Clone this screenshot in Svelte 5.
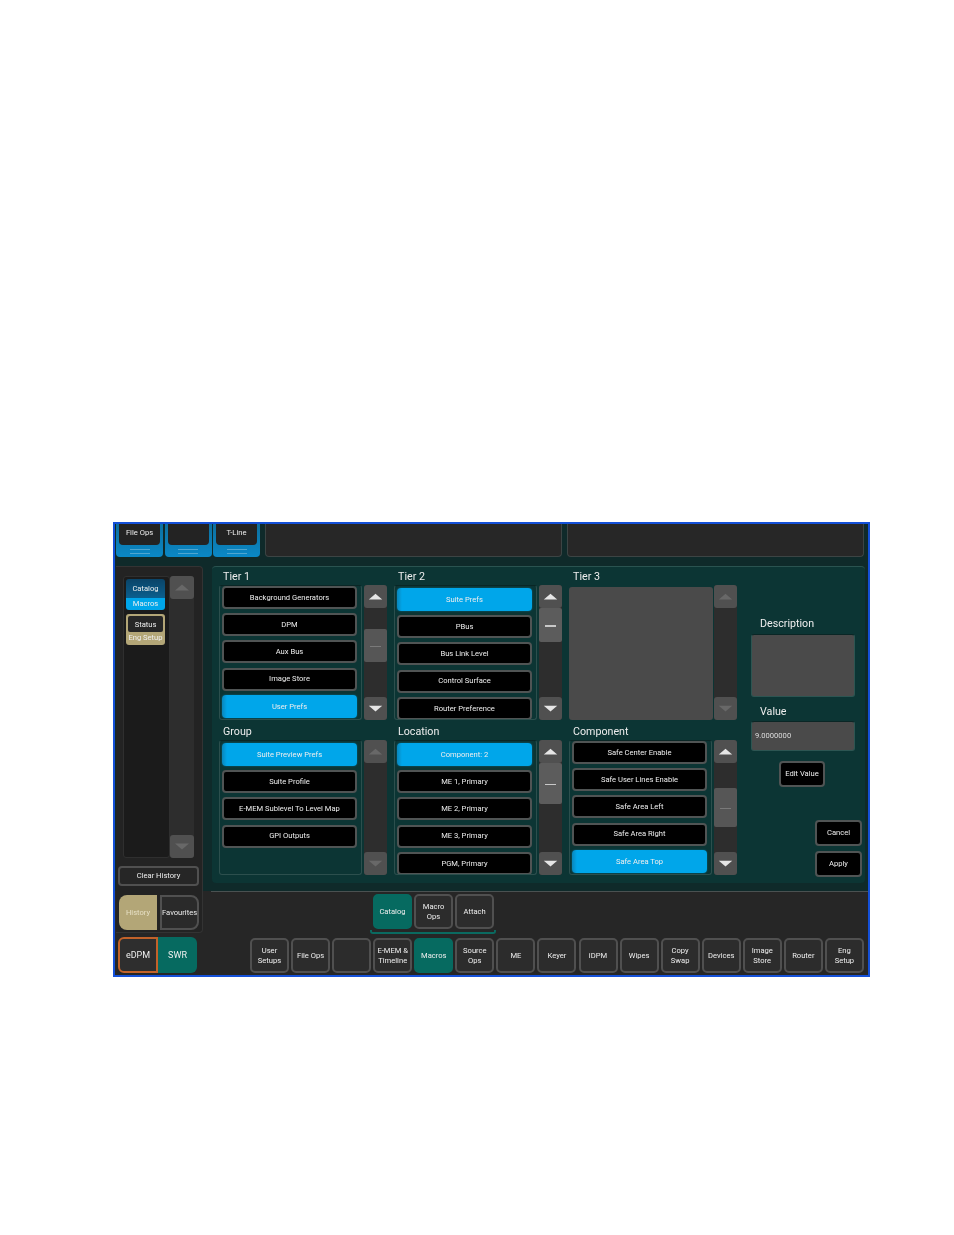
<script>
  const tabs = ['File Ops', '', 'T-Line'];

  const lists = [
    { title: 'Tier 1', active: 4, items: ['Background Generators', 'DPM', 'Aux Bus', 'Image Store', 'User Prefs'], thumb: [44, 33], dim: true, on: true, pitch: 'a' },
    { title: 'Tier 2', active: 0, items: ['Suite Prefs', 'PBus', 'Bus Link Level', 'Control Surface', 'Router Preference'], thumb: [23, 34], on: true, pitch: 'b' },
    { title: 'Tier 3', active: -1, items: [], on: false, empty: true },
    { title: 'Group', active: 0, items: ['Suite Preview Prefs', 'Suite Profile', 'E-MEM Sublevel To Level Map', 'GPI Outputs'], on: false, pitch: 'b' },
    { title: 'Location', active: 0, items: ['Component: 2', 'ME 1, Primary', 'ME 2, Primary', 'ME 3, Primary', 'PGM, Primary'], thumb: [23, 41], on: true, pitch: 'b' },
    { title: 'Component', active: 4, items: ['Safe Center Enable', 'Safe User Lines Enable', 'Safe Area Left', 'Safe Area Right', 'Safe Area Top'], thumb: [48, 39], dim: true, on: true, pitch: 'a' }
  ];

  const nav = [
    ['User', 'Setups'], ['File Ops'], [''], ['E-MEM &', 'Timeline'], ['Macros'], ['Source', 'Ops'], ['ME'], ['Keyer'],
    ['iDPM'], ['Wipes'], ['Copy', 'Swap'], ['Devices'], ['Image', 'Store'], ['Router'], ['Eng', 'Setup']
  ];
</script>

<div class="window">
  <header class="top">
    {#each tabs as tab}
      <div class="tab">
        <div class="tab-face">{tab}</div>
        <div class="tab-lines"></div>
      </div>
    {/each}
    <div class="slot wide"></div>
    <div class="slot wider"></div>
  </header>

  <div class="body">
    <aside class="left">
      <div class="side">
        <div class="history">
          <div class="history-list">
            <div class="chip blue"><span>Catalog</span><em>Macros</em></div>
            <div class="chip tan"><span>Status</span><em>Eng Setup</em></div>
          </div>
          <div class="track tall">
            <div class="arrow"><svg viewBox="0 0 24 22"><path d="M5 14 12 8 19 14Z" /></svg></div>
            <div class="arrow"><svg viewBox="0 0 24 22"><path d="M5 8 12 14 19 8Z" /></svg></div>
          </div>
        </div>
        <button class="clear">Clear History</button>
        <div class="modes">
          <button class="mode picked">History</button>
          <button class="mode">Favourites</button>
        </div>
      </div>
      <div class="sys">
        <button class="edpm">eDPM</button>
        <button class="swr">SWR</button>
      </div>
    </aside>

    <div class="right">
      <main class="panel">
        {#each lists as list}
          <section class="cell">
            <h2>{list.title}</h2>
            <div class="row">
              {#if list.empty}
                <div class="blank"></div>
              {:else}
                <div class="list {list.pitch}">
                  {#each list.items as item, i}
                    <button class="item" class:active={i === list.active}>{item}</button>
                  {/each}
                </div>
              {/if}
              <div class="track">
                <div class="arrow" class:live={list.on}><svg viewBox="0 0 24 22"><path d="M5 14 12 8 19 14Z" /></svg></div>
                {#if list.thumb}
                  <div class="thumb" class:dim={list.dim} style="top: {list.thumb[0]}px; height: {list.thumb[1]}px"><i></i></div>
                {/if}
                <div class="arrow" class:live={list.on}><svg viewBox="0 0 24 22"><path d="M5 8 12 14 19 8Z" /></svg></div>
              </div>
            </div>
          </section>
        {/each}

        <section class="values">
          <h3>Description</h3>
          <div class="box desc"></div>
          <h3 class="value-label">Value</h3>
          <div class="box val">9.0000000</div>
          <button class="action edit">Edit Value</button>
          <button class="action cancel">Cancel</button>
          <button class="action apply">Apply</button>
        </section>
      </main>

      <footer class="lower">
        <div class="subs">
          <button class="key teal">Catalog</button>
          <button class="key">Macro<br />Ops</button>
          <button class="key">Attach</button>
        </div>
        <div class="bracket"></div>
        <nav class="keys">
          {#each nav as label}
            <button class="key" class:teal={label[0] === 'Macros'}>
              {#each label as line, i}{#if i > 0}<br />{/if}{line}{/each}
            </button>
          {/each}
        </nav>
      </footer>
    </div>
  </div>
</div>

<style>
  :global(body) {
    background: #fff;
  }

  .window {
    box-sizing: border-box;
    width: 757px;
    height: 455px;
    margin: 522px 0 0 113px;
    border: 2px solid #1450d8;
    background: #0f2a2a;
    font-family: Roboto, sans-serif;
    font-size: 7.6px;
    color: #eee;
    overflow: hidden;
    filter: blur(0.3px);
  }

  button {
    font: inherit;
    color: inherit;
    padding: 0;
    line-height: 9.5px;
  }

  .top {
    display: flex;
    height: 34px;
    padding-left: 1px;
  }

  .tab {
    box-sizing: border-box;
    width: 47px;
    height: 33px;
    margin-right: 1.5px;
    padding: 0 3px;
    background: linear-gradient(#0d6f9f, #0a88c6);
    border-radius: 0 0 4px 4px;
  }

  .tab-face {
    height: 21px;
    padding-top: 4px;
    box-sizing: border-box;
    background: #232323;
    border-radius: 0 0 4px 4px;
    text-align: center;
  }

  .tab-lines {
    width: 20px;
    height: 3px;
    margin: 4px auto 0;
    border-top: 1px solid #4fa6d0;
    border-bottom: 1px solid #4fa6d0;
  }

  .slot {
    box-sizing: border-box;
    height: 33px;
    background: #272727;
    border: 1px solid #3c4444;
    border-top: 0;
    border-radius: 0 0 4px 4px;
  }

  .wide {
    width: 297px;
    margin-left: 3.5px;
  }

  .wider {
    width: 297px;
    margin-left: 5px;
  }

  .body {
    display: flex;
  }

  .left {
    box-sizing: border-box;
    width: 97px;
    height: 417px;
    padding: 8px 0 0 1px;
    background: linear-gradient(#0f2a2a 333px, #262626 333px);
  }

  .side {
    box-sizing: border-box;
    width: 87px;
    height: 367px;
    padding: 9px 0 0 2px;
    background: #232323;
    border: 1px solid #333;
    border-left: 0;
    border-radius: 0 4px 4px 0;
  }

  .history {
    display: flex;
    height: 282px;
    margin-left: 5px;
  }

  .history-list {
    box-sizing: border-box;
    width: 47px;
    padding: 2px;
    background: #1b1b1b;
    border: 1px solid #2f2f2f;
    border-radius: 3px;
  }

  .chip {
    width: 39px;
    height: 31px;
    margin-bottom: 4px;
    border-radius: 3px;
    text-align: center;
    overflow: hidden;
  }

  .chip span {
    display: block;
    height: 19px;
    line-height: 20px;
  }

  .chip em {
    display: block;
    font-style: normal;
    line-height: 12px;
    white-space: nowrap;
  }

  .chip.blue span {
    background: linear-gradient(#0a4468, #0b5f8e);
  }

  .chip.blue em {
    background: #00a6ea;
  }

  .chip.tan {
    background: #b3a677;
    padding: 2px;
    box-sizing: border-box;
  }

  .chip.tan span {
    height: 16px;
    line-height: 17px;
    margin: 0;
    background: #262626;
    border-radius: 2px;
  }

  .chip.tan em {
    margin: 0 -2px;
    line-height: 11px;
  }

  .track {
    position: relative;
    display: flex;
    flex-direction: column;
    justify-content: space-between;
    flex: none;
    width: 23px;
    height: 135px;
    background: #2d2d2d;
    border-radius: 3px;
  }

  .track.tall {
    width: 24px;
    height: 282px;
  }

  .arrow {
    height: 23px;
    background: #505050;
    border-radius: 3px;
    z-index: 1;
  }

  .arrow svg {
    display: block;
    width: 100%;
    height: 23px;
    fill: #686868;
  }

  .arrow.live svg {
    fill: #e6e6e6;
  }

  .thumb {
    position: absolute;
    left: 0;
    width: 100%;
    background: #5c5c5c;
    border-radius: 2px;
  }

  .thumb i {
    position: absolute;
    left: 6px;
    top: 50%;
    width: 11px;
    height: 1.5px;
    background: #c8c8c8;
  }

  .thumb.dim {
    background: #565656;
  }

  .thumb.dim i {
    background: #7a7a7a;
  }

  .clear {
    display: block;
    box-sizing: border-box;
    width: 81px;
    height: 20px;
    margin: 8px 0 0 0;
    background: #262626;
    border: 2px solid #505050;
    border-radius: 4px;
  }

  .modes {
    display: flex;
    gap: 3px;
    margin: 9px 0 0 1px;
  }

  .mode {
    box-sizing: border-box;
    width: 39px;
    height: 35px;
    background: #2a2a2a;
    border: 2px solid #505050;
    border-radius: 0 8px 8px 0;
    white-space: nowrap;
  }

  .mode.picked {
    width: 38px;
    background: #b3a677;
    border: 0;
    border-radius: 8px 0 0 8px;
    color: #e6dfc4;
  }

  .sys {
    display: flex;
    margin: 4px 0 0 2px;
  }

  .edpm {
    box-sizing: border-box;
    width: 40px;
    height: 36px;
    padding-top: 1px;
    background: #2e2e2e;
    border: 2px solid #c2622a;
    border-radius: 6px 0 0 6px;
    font-size: 9px;
  }

  .swr {
    width: 39px;
    height: 36px;
    padding-top: 1px;
    margin-left: 0;
    background: #066a60;
    border: 0;
    border-radius: 0 6px 6px 0;
    font-size: 9px;
  }

  .right {
    flex: 1;
  }

  .panel {
    box-sizing: border-box;
    display: grid;
    grid-template-columns: 168px 168px 168px 1fr;
    grid-template-rows: 155px 155px;
    column-gap: 7px;
    width: 653px;
    height: 317px;
    margin: 8px 0;
    padding: 0 0 0 7px;
    background: #0c3534;
    border-top: 1px solid #2a5350;
    border-radius: 4px;
  }

  h2,
  h3 {
    margin: 0;
    font-weight: 400;
    font-size: 10.7px;
  }

  h2 {
    height: 18px;
    padding-left: 4px;
    line-height: 20px;
  }

  .row {
    display: flex;
    gap: 2px;
  }

  .list {
    box-sizing: border-box;
    display: flex;
    flex-direction: column;
    gap: 4.2px;
    width: 143px;
    height: 135px;
    padding: 0 2px;
    border: 1px solid #2c4f4d;
    border-top-color: #0a2625;
    border-radius: 3px;
    overflow: hidden;
  }

  .list.b {
    padding-top: 2px;
  }

  .item {
    flex: none;
    box-sizing: border-box;
    width: 135px;
    height: 23px;
    background: #000;
    border: 2px solid #505454;
    border-radius: 4px;
    white-space: nowrap;
  }

  .item.active {
    background: linear-gradient(90deg, #0a86bb, #00a6ea 5px);
    border: 0;
    box-shadow: 0 0 2px #0a6b8a;
  }

  .blank {
    width: 144px;
    height: 133px;
    margin-top: 2px;
    margin-right: -1px;
    background: #4a4a4a;
    border-radius: 3px;
  }

  .values {
    display: flex;
    flex-direction: column;
    grid-column: 4;
    grid-row: 1 / 3;
    padding: 50px 0 0 7px;
  }

  h3 {
    padding-left: 9px;
    height: 17px;
    line-height: 13px;
  }

  .value-label {
    margin-top: 7px;
    line-height: 15px;
  }

  .box {
    box-sizing: border-box;
    flex: none;
    width: 104px;
    background: #4a4a4a;
    border: 1px solid #2d5552;
    border-top-color: #0a2625;
    border-radius: 3px;
  }

  .desc {
    height: 63px;
  }

  .val {
    height: 30px;
    padding: 9px 0 0 3px;
    color: #ddd;
  }

  .action {
    box-sizing: border-box;
    flex: none;
    height: 26px;
    background: #000;
    border: 2px solid #505454;
    border-radius: 4px;
  }

  .edit {
    width: 46px;
    margin: 10px 0 0 28px;
  }

  .cancel {
    width: 47px;
    margin: 33px 0 0 64px;
  }

  .apply {
    width: 47px;
    margin: 5px 0 0 64px;
  }

  .lower {
    box-sizing: border-box;
    height: 84px;
    margin-left: -1px;
    padding-top: 2px;
    background: #262626;
    border-top: 1px solid #4a5151;
  }

  .subs,
  .keys {
    display: flex;
    gap: 2.07px;
  }

  .subs {
    padding-left: 162px;
  }

  .keys {
    padding-left: 39px;
    margin-top: 4px;
  }

  .key {
    box-sizing: border-box;
    flex: none;
    width: 39px;
    height: 35px;
    background: #2c2c2c;
    border: 2px solid #505050;
    border-radius: 5px;
  }

  .key.teal {
    background: #066a60;
    border-color: #066a60;
  }

  .bracket {
    box-sizing: border-box;
    width: 126px;
    height: 4px;
    margin: 1px 0 0 159px;
    border: 2px solid #0a6a60;
    border-top: 0;
    border-radius: 0 0 3px 3px;
  }
</style>
